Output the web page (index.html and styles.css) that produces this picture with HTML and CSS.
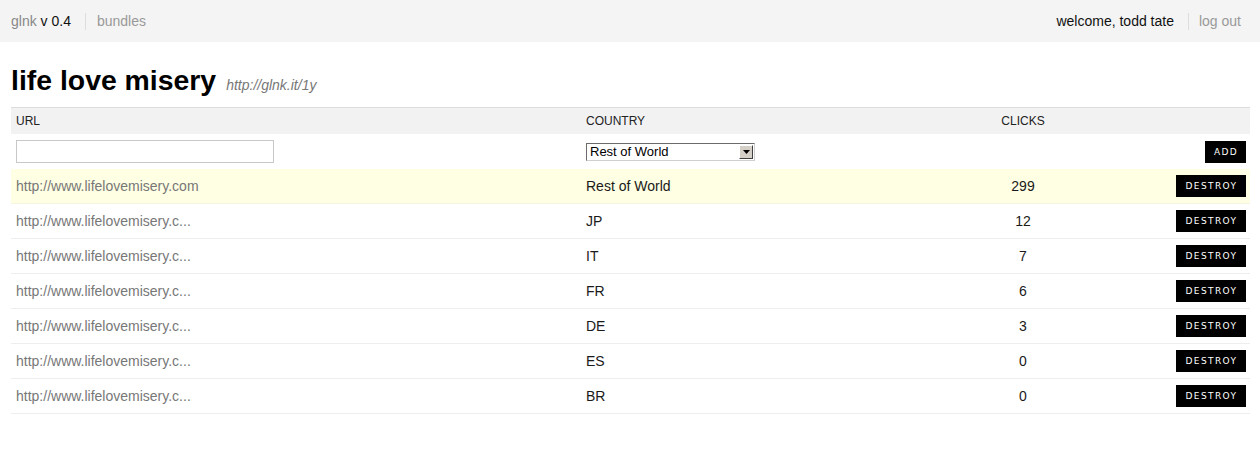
FILE: index.html
```html
<!DOCTYPE html>
<html>
<head>
<meta charset="utf-8">
<title>glnk</title>
<link rel="stylesheet" href="styles.css">
</head>
<body>
<div class="topbar">
  <div class="nav-left">
    <span class="brand">glnk <span class="ver">v 0.4</span></span>
    <span class="sep"></span>
    <a class="nav-link">bundles</a>
  </div>
  <div class="nav-right">
    <span class="welcome">welcome, todd tate</span>
    <span class="sep"></span>
    <a class="nav-link">log out</a>
  </div>
</div>
<div class="content">
  <h1 class="title">life love misery<span class="short">http://glnk.it/1y</span></h1>
  <table class="links">
    <colgroup>
      <col class="c-url"><col class="c-country"><col class="c-clicks"><col class="c-act">
    </colgroup>
    <thead>
      <tr><th>URL</th><th>COUNTRY</th><th class="center">CLICKS</th><th></th></tr>
    </thead>
    <tbody>
      <tr class="form-row">
        <td><input class="url-input" type="text"></td>
        <td><div class="fake-select"><span class="sel-text">Rest of World</span><span class="sel-btn"><svg width="7" height="4" viewBox="0 0 7 4"><path d="M0 0H7L3.5 4Z" fill="#000"/></svg></span></div></td>
        <td></td>
        <td class="act"><button class="btn btn-add">ADD</button></td>
      </tr>
      <tr class="hl"><td class="url">http://www.lifelovemisery.com</td><td>Rest of World</td><td class="center">299</td><td class="act"><button class="btn">DESTROY</button></td></tr>
      <tr><td class="url">http://www.lifelovemisery.c...</td><td>JP</td><td class="center">12</td><td class="act"><button class="btn">DESTROY</button></td></tr>
      <tr><td class="url">http://www.lifelovemisery.c...</td><td>IT</td><td class="center">7</td><td class="act"><button class="btn">DESTROY</button></td></tr>
      <tr><td class="url">http://www.lifelovemisery.c...</td><td>FR</td><td class="center">6</td><td class="act"><button class="btn">DESTROY</button></td></tr>
      <tr><td class="url">http://www.lifelovemisery.c...</td><td>DE</td><td class="center">3</td><td class="act"><button class="btn">DESTROY</button></td></tr>
      <tr><td class="url">http://www.lifelovemisery.c...</td><td>ES</td><td class="center">0</td><td class="act"><button class="btn">DESTROY</button></td></tr>
      <tr><td class="url">http://www.lifelovemisery.c...</td><td>BR</td><td class="center">0</td><td class="act"><button class="btn">DESTROY</button></td></tr>
    </tbody>
  </table>
</div>
</body>
</html>
```
FILE: styles.css
```css
html, body { margin: 0; padding: 0; background: #fff; }
body { font-family: "Liberation Sans", Arial, sans-serif; color: #111; }

.topbar {
  height: 42px;
  background: #f4f4f4;
  display: flex;
  justify-content: space-between;
  align-items: center;
  padding: 0 19px 0 11px;
  font-size: 14px;
}
.nav-left, .nav-right { display: flex; align-items: center; }
.brand { color: #888; }
.ver { color: #111; }
.sep { display: inline-block; width: 1px; height: 17px; background: #ddd; margin: 0 11px 0 14px; }
.nav-right .sep { margin: 0 10px 0 14px; }
.nav-link { color: #999; }
.welcome { color: #111; }

.content { padding: 0 10px 0 11px; }
.title {
  margin: 22px 0 0 0;
  height: 43px;
  font-size: 28.4px;
  font-weight: bold;
  line-height: 32px;
  color: #000;
}
.short { font-size: 14px; font-weight: normal; font-style: italic; color: #777; margin-left: 10px; }

.links { width: 100%; border-collapse: collapse; table-layout: fixed; font-size: 14px; }
.c-url { width: 570px; }
.c-country { width: 365px; }
.c-clicks { width: 154px; }
.c-act { width: auto; }
.links thead tr { border-top: 1px solid #dcdcdc; background: #f2f2f2; }
.links th { height: 26px; padding: 0 5px; text-align: left; font-weight: normal; font-size: 12px; color: #222; }
.links td { height: 34px; padding: 0 5px; border-bottom: 1px solid #eee; color: #1a1a1a; }
.links .form-row td { height: 35px; border-bottom: none; }
.links tr.hl td { background: #ffffe3; border-bottom-color: #f6f6e0; }
.links td.url { color: #777; }
.center { text-align: center !important; }
.links td.act { text-align: right; padding-right: 4px; }

.url-input {
  width: 258px; height: 23px; box-sizing: border-box;
  border: 1px solid #c8c8c8; margin: 0; padding: 0 3px; display: block;
}
.fake-select {
  width: 169px; height: 18px; box-sizing: border-box;
  border: 1px solid #6b6b6b; border-right-color: #cfcfcf; border-bottom-color: #cfcfcf;
  display: flex; align-items: center; justify-content: space-between;
  background: #fff; margin-top: 1px;
}
.sel-text { font-size: 13px; color: #000; padding-left: 3px; line-height: 16px; }
.sel-btn {
  width: 14px; height: 14px; box-sizing: border-box; margin-right: 1px;
  background: #d4d0c8; border: 1px solid; border-color: #fff #404040 #404040 #fff;
  display: flex; align-items: center; justify-content: center;
}
.btn {
  background: #000; color: #fff; border: none; margin: 0;
  font-family: "DejaVu Sans", Verdana, sans-serif; font-size: 9px; letter-spacing: 1.4px;
  height: 22px; padding: 0 0 0 1px; cursor: pointer;
  width: 70px;
}
.btn-add { width: 41px; }
```
